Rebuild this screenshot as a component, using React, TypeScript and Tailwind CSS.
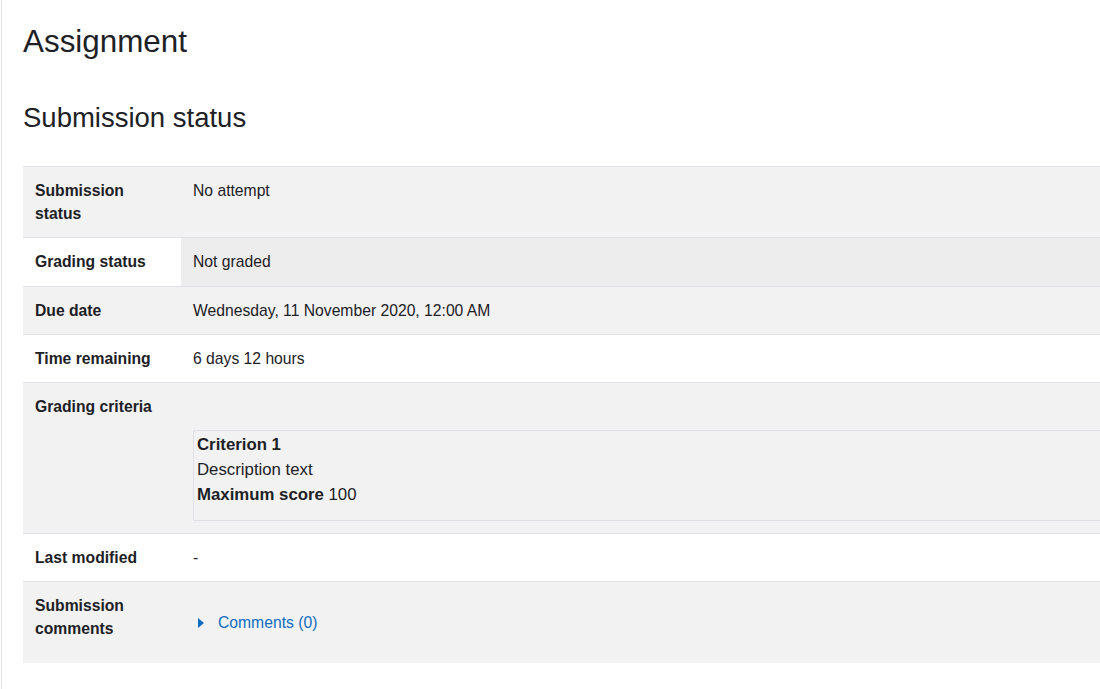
import React from "react";

type Row = {
  label: string;
  value: React.ReactNode;
  striped: boolean;
  valueClass?: string;
};

function CriteriaBox() {
  return (
    <div className="mt-[35px] border border-[#dee2e6] pt-[2px] pb-[12px] px-[3px] text-[16.8px] leading-[24.9px]">
      <div className="font-bold">Criterion 1</div>
      <div>Description text</div>
      <div>
        <span className="font-bold">Maximum score</span> 100
      </div>
    </div>
  );
}

function CommentsToggle() {
  return (
    <div className="flex h-[57px] items-center">
      <a href="#" className="flex items-center text-[#0f6cbf]">
        <svg width="6" height="10" viewBox="0 0 6 10" className="ml-[5px] mr-[14px]">
          <path d="M0 0 L6 5 L0 10 Z" fill="#0f6cbf" />
        </svg>
        Comments (0)
      </a>
    </div>
  );
}

const rows: Row[] = [
  { label: "Submission status", value: "No attempt", striped: true },
  { label: "Grading status", value: "Not graded", striped: false, valueClass: "bg-[#ededed]" },
  { label: "Due date", value: "Wednesday, 11 November 2020, 12:00 AM", striped: true },
  { label: "Time remaining", value: "6 days 12 hours", striped: false },
  { label: "Grading criteria", value: <CriteriaBox />, striped: true },
  { label: "Last modified", value: "-", striped: false },
  { label: "Submission comments", value: <CommentsToggle />, striped: true },
];

export default function App() {
  return (
    <div
      className="h-[689px] w-[1100px] overflow-hidden bg-white text-[#1d2125]"
      style={{ fontFamily: '"Liberation Sans", Arial, sans-serif' }}
    >
      <div className="ml-px h-full border-l border-[#dee2e6] pl-[21px]">
        <h2 className="pt-[23px] text-[31.4px] leading-[1.2] font-normal">Assignment</h2>
        <h3 className="mt-[40px] text-[27.5px] leading-[1.2] font-normal">Submission status</h3>

        <div className="mt-[32px] w-[1120px] text-[15.7px] leading-[23.3px]">
          {rows.map((r) => (
            <div
              key={r.label}
              className={`flex border-t border-[#dee2e6] ${r.striped ? "bg-[#f2f2f2]" : "bg-white"}`}
            >
              <div className="w-[158px] shrink-0 px-3 py-3 font-bold">{r.label}</div>
              <div className={`flex-1 px-3 py-3 ${r.valueClass ?? ""}`}>{r.value}</div>
            </div>
          ))}
        </div>
      </div>
    </div>
  );
}
